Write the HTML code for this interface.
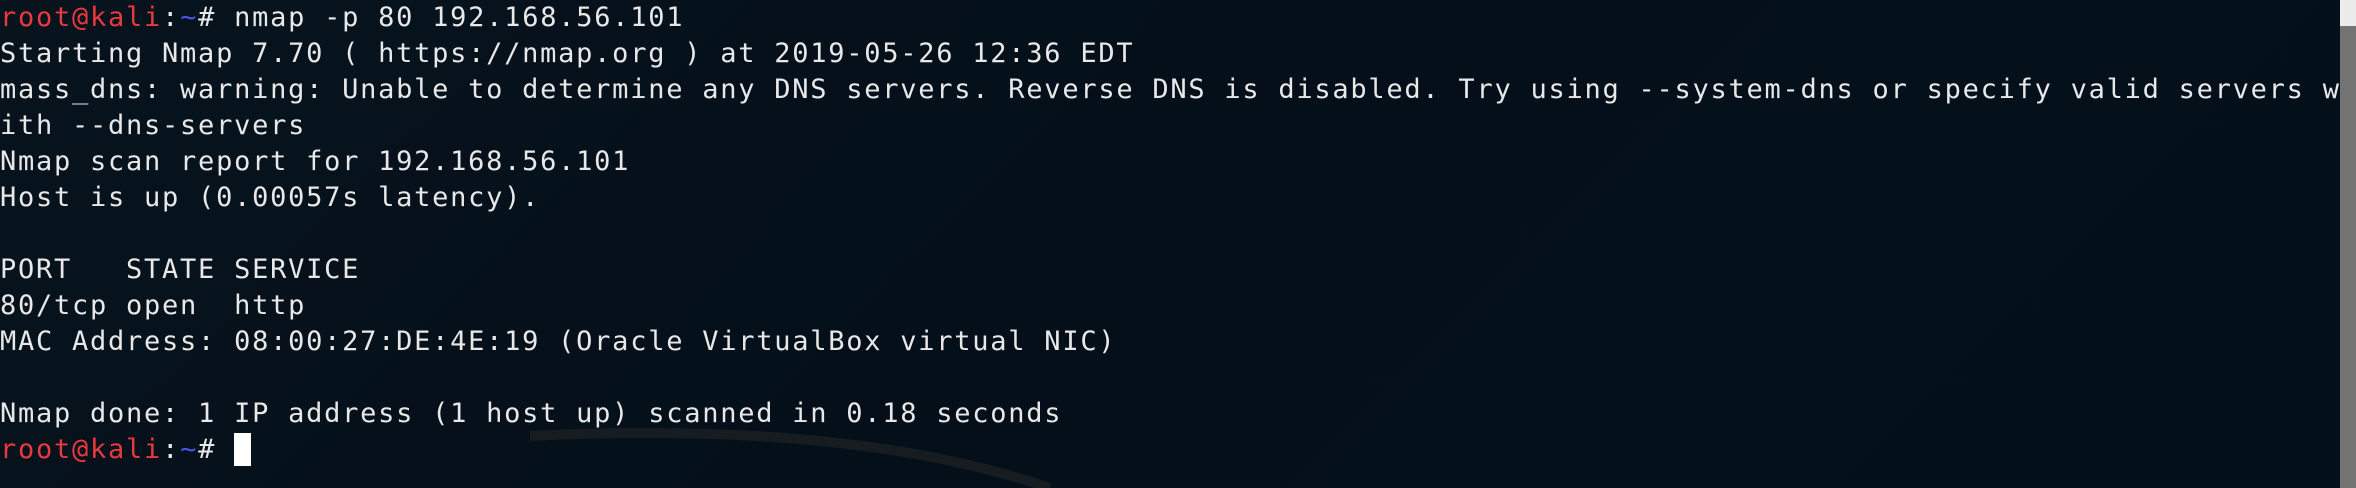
<!DOCTYPE html>
<html><head><meta charset="utf-8"><style>
html,body{margin:0;padding:0;}
body{width:2356px;height:488px;overflow:hidden;background:#040f19;position:relative;}
.bg{position:absolute;left:0;top:0;width:2340px;height:488px;background:linear-gradient(135deg,#07131d 0%,#040f19 45%,#03101a 100%);}
pre{position:absolute;left:0;top:0;margin:0;font-family:"DejaVu Sans Mono","Liberation Mono",monospace;font-size:27px;line-height:36px;letter-spacing:1.75px;color:#e8e8e8;white-space:pre;}
.r{color:#e8393f;}
.b{color:#4a55e6;}
.cur{display:inline-block;width:17px;height:33px;background:#fff;vertical-align:-8px;}
.sb{position:absolute;left:2340px;top:0;width:16px;height:488px;background:#737373;}
.sbt{position:absolute;left:2340px;top:0;width:16px;height:26px;background:#ececec;}
svg{position:absolute;left:0;top:0;}
</style></head><body>
<div class="bg"></div>
<svg width="2340" height="488"><path d="M520 498 Q760 410 1060 455 L1060 488 L540 488 Z" fill="none"/><path d="M530 436 Q850 420 1050 488" stroke="#1c1f22" stroke-width="10" fill="none" opacity="0.8"/></svg>
<pre><span class="r">root@kali</span>:<span class="b">~</span># nmap -p 80 192.168.56.101
Starting Nmap 7.70 ( https://nmap.org ) at 2019-05-26 12:36 EDT
mass_dns: warning: Unable to determine any DNS servers. Reverse DNS is disabled. Try using --system-dns or specify valid servers w
ith --dns-servers
Nmap scan report for 192.168.56.101
Host is up (0.00057s latency).

PORT   STATE SERVICE
80/tcp open  http
MAC Address: 08:00:27:DE:4E:19 (Oracle VirtualBox virtual NIC)

Nmap done: 1 IP address (1 host up) scanned in 0.18 seconds
<span class="r">root@kali</span>:<span class="b">~</span># <span class="cur"></span></pre>
<div class="sb"></div><div class="sbt"></div>
</body></html>
